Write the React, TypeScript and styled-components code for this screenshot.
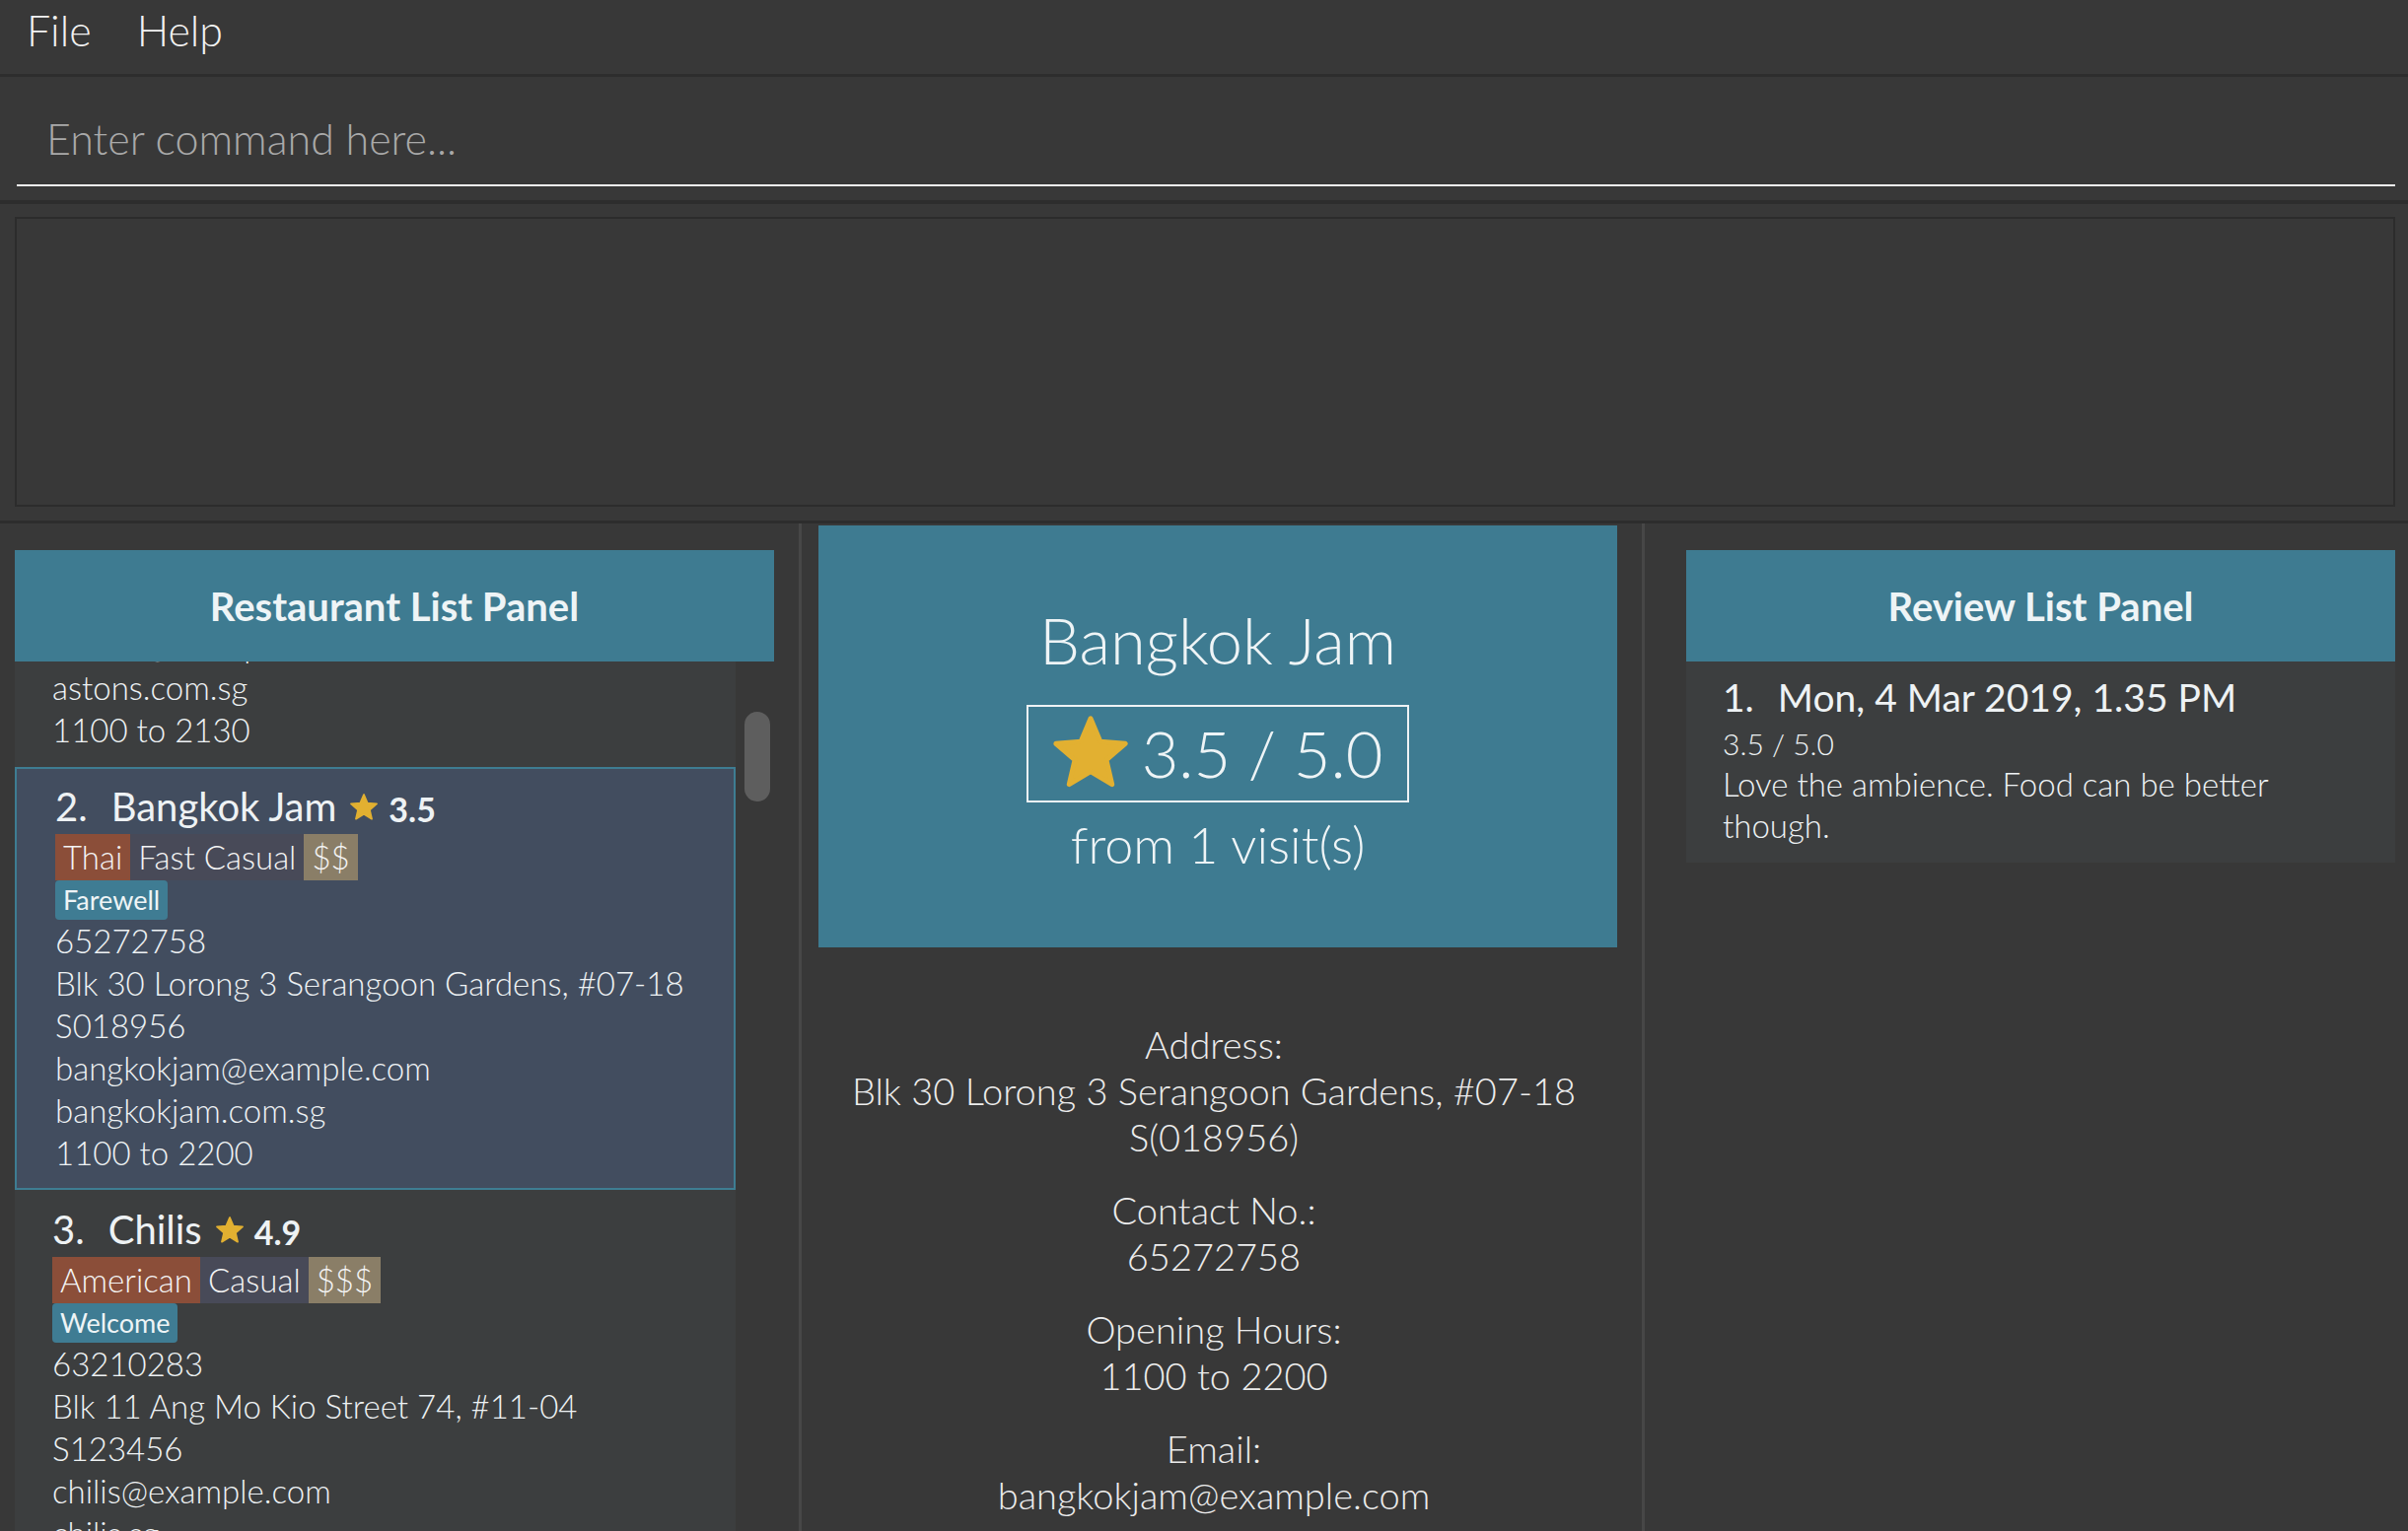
import React from "react";
import styled, { createGlobalStyle } from "styled-components";

const GlobalStyle = createGlobalStyle`
  html, body { margin: 0; padding: 0; background: #383838; }
  body {
    width: 2442px; height: 1553px; overflow: hidden;
    font-family: Lato, "Open Sans", "Liberation Sans", sans-serif;
    color: #eef2f4;
  }
  * { box-sizing: border-box; }
`;

const Window = styled.div`
  width: 2442px;
  height: 1553px;
  display: flex;
  flex-direction: column;
  background: #383838;
  overflow: hidden;
`;

const MenuBar = styled.div`
  flex: none;
  height: 78px;
  display: flex;
  align-items: flex-start;
  padding-left: 4px;
  border-bottom: 3px solid #2d2d2d;
`;

const MenuItem = styled.span`
  font-size: 43px;
  font-weight: 300;
  line-height: 61px;
  padding: 0 23px;
  color: #f2f2f2;
`;

const CommandSection = styled.div`
  flex: none;
  height: 129px;
  display: flex;
  align-items: flex-end;
  padding: 0 13px 14px 17px;
  border-bottom: 4px solid #2d2d2d;
`;

const CommandInput = styled.input`
  width: 100%;
  height: 75px;
  padding: 0 0 21px 30px;
  border: none;
  border-bottom: 2px solid #f2f2f2;
  background: transparent;
  outline: none;
  font-family: inherit;
  font-size: 43px;
  font-weight: 300;
  line-height: 52px;
  color: #f2f2f2;
  &::placeholder { color: #a9a9a9; }
`;

const ResultSection = styled.div`
  flex: none;
  height: 324px;
  display: flex;
  padding: 13px 13px 14px 15px;
  border-bottom: 3px solid #2d2d2d;
`;

const ResultBox = styled.div`
  flex: 1;
  border: 2px solid #2c2c2c;
  background: #383838;
`;

const Main = styled.div`
  flex: 1;
  min-height: 0;
  display: flex;
`;

const Divider = styled.div`
  flex: none;
  width: 3px;
  background: #474747;
`;

const LeftPane = styled.div`
  flex: none;
  width: 810px;
  display: flex;
  flex-direction: column;
  padding: 27px 25px 0 15px;
`;

const CenterPane = styled.div`
  flex: none;
  width: 852px;
  display: flex;
  flex-direction: column;
  padding: 2px 25px 0 17px;
`;

const RightPane = styled.div`
  flex: 1;
  display: flex;
  flex-direction: column;
  padding: 27px 13px 0 42px;
`;

const PanelHeader = styled.div`
  flex: none;
  height: 113px;
  display: flex;
  align-items: center;
  justify-content: center;
  background: #3e7b91;
  font-size: 40px;
  font-weight: 700;
  color: #eef4f6;
`;

const ListArea = styled.div`
  flex: 1;
  min-height: 0;
  display: flex;
`;

const ListViewport = styled.div`
  flex: none;
  width: 731px;
  overflow: hidden;
  background: #3c3e3f;
`;

const ListTrack = styled.div<{ $offset: number }>`
  margin-top: ${(p) => -p.$offset}px;
`;

const Gutter = styled.div`
  flex: 1;
  padding: 51px 4px 0 9px;
`;

const Thumb = styled.div`
  height: 91px;
  border-radius: 13px;
  background: #5e5e5e;
`;

const Card = styled.div<{ $selected?: boolean }>`
  border: 2px solid ${(p) => (p.$selected ? "#3e7d92" : "transparent")};
  background: ${(p) => (p.$selected ? "#424d5f" : "#3c3e3f")};
  padding: 11px 20px 14px ${(p) => (p.$selected ? 39 : 36)}px;
`;

const TitleRow = styled.div`
  display: flex;
  align-items: center;
  height: 54px;
  white-space: nowrap;
`;

const Index = styled.span<{ $size?: number }>`
  font-size: ${(p) => p.$size ?? 40}px;
  font-weight: 400;
  margin-right: 24px;
`;

const Name = styled.span<{ $size?: number }>`
  font-size: ${(p) => p.$size ?? 40}px;
  font-weight: 400;
`;

const SmallStarWrap = styled.span`
  display: flex;
  margin: 2px 11px 0 14px;
`;

const TitleRating = styled.span`
  font-size: 34px;
  font-weight: 700;
  margin-top: 4px;
`;

const TagRow = styled.div`
  display: flex;
  margin-top: 1px;
  height: 47px;
`;

const tagColors: Record<string, string> = {
  cuisine: "#8b4e39",
  type: "#484a58",
  price: "#8a7e67",
};

const Tag = styled.span<{ $kind: "cuisine" | "type" | "price" }>`
  font-size: 33px;
  font-weight: 300;
  line-height: 47px;
  padding: 0 8px;
  background: ${(p) => tagColors[p.$kind]};
  color: #f4f4f4;
`;

const OccasionRow = styled.div`
  display: flex;
  height: 40px;
`;

const Occasion = styled.span`
  font-size: 27px;
  font-weight: 400;
  line-height: 40px;
  padding: 0 8px;
  border-radius: 4px;
  background: #3f7c93;
  color: #eef4f6;
`;

const DetailLine = styled.div`
  font-size: 33px;
  font-weight: 300;
  line-height: 43px;
  white-space: nowrap;
`;

const TealCard = styled.div`
  flex: none;
  height: 428px;
  display: flex;
  flex-direction: column;
  align-items: center;
  justify-content: center;
  background: #3e7b91;
`;

const BigName = styled.div`
  font-size: 65px;
  font-weight: 300;
  line-height: 80px;
  color: #eef4f6;
`;

const RatingBox = styled.div`
  margin-top: 26px;
  height: 99px;
  display: flex;
  align-items: center;
  gap: 14px;
  padding: 0 25px;
  border: 2px solid #eef2f4;
`;

const BigRating = styled.span`
  font-size: 65px;
  font-weight: 300;
  line-height: 95px;
  color: #eef4f6;
`;

const Visits = styled.div`
  margin-top: 12px;
  font-size: 52px;
  font-weight: 300;
  line-height: 60px;
  color: #eef4f6;
`;

const InfoList = styled.div`
  margin-top: 75px;
  padding-right: 8px;
  display: flex;
  flex-direction: column;
  align-items: center;
  gap: 27px;
`;

const InfoBlock = styled.div`
  display: flex;
  flex-direction: column;
  align-items: center;
`;

const InfoText = styled.div`
  font-size: 38px;
  font-weight: 300;
  line-height: 47px;
  text-align: center;
  white-space: nowrap;
  color: #ececec;
`;

const ReviewCard = styled.div`
  background: #3c3e3f;
  padding: 9px 40px 17px 37px;
`;

const ReviewTitle = styled.div`
  display: flex;
  align-items: center;
  height: 54px;
  white-space: nowrap;
`;

const ReviewRating = styled.div`
  font-size: 30px;
  font-weight: 300;
  line-height: 40px;
`;

const ReviewText = styled.div`
  font-size: 33px;
  font-weight: 300;
  line-height: 42px;
`;

const StarIcon = ({ size }: { size: number }) => (
  <svg width={size} height={size} viewBox="1.2 1.2 21.6 21.6">
    <path
      d="M12 17.27L18.18 21l-1.64-7.03L22 9.24l-7.19-.61L12 2 9.19 8.63 2 9.24l5.46 4.73L5.82 21z"
      fill="#e2b031"
      stroke="#e2b031"
      strokeWidth={1.4}
      strokeLinejoin="round"
    />
  </svg>
);

type Restaurant = {
  id: number;
  name: string;
  rating: string;
  cuisine: string;
  type: string;
  price: string;
  occasion: string;
  phone: string;
  address: string;
  postal: string;
  email: string;
  website: string;
  hours: string;
};

const restaurants: Restaurant[] = [
  {
    id: 1,
    name: "Astons",
    rating: "4.2",
    cuisine: "Western",
    type: "Casual",
    price: "$$",
    occasion: "Family",
    phone: "62345678",
    address: "Blk 16 Marina Boulevard, #01-01",
    postal: "S018989",
    email: "astons@example.com",
    website: "astons.com.sg",
    hours: "1100 to 2130",
  },
  {
    id: 2,
    name: "Bangkok Jam",
    rating: "3.5",
    cuisine: "Thai",
    type: "Fast Casual",
    price: "$$",
    occasion: "Farewell",
    phone: "65272758",
    address: "Blk 30 Lorong 3 Serangoon Gardens, #07-18",
    postal: "S018956",
    email: "bangkokjam@example.com",
    website: "bangkokjam.com.sg",
    hours: "1100 to 2200",
  },
  {
    id: 3,
    name: "Chilis",
    rating: "4.9",
    cuisine: "American",
    type: "Casual",
    price: "$$$",
    occasion: "Welcome",
    phone: "63210283",
    address: "Blk 11 Ang Mo Kio Street 74, #11-04",
    postal: "S123456",
    email: "chilis@example.com",
    website: "chilis.sg",
    hours: "1100 to 2200",
  },
];

const RestaurantCard = ({ r, selected }: { r: Restaurant; selected?: boolean }) => (
  <Card $selected={selected}>
    <TitleRow>
      <Index>{r.id}.</Index>
      <Name>{r.name}</Name>
      <SmallStarWrap>
        <StarIcon size={28} />
      </SmallStarWrap>
      <TitleRating>{r.rating}</TitleRating>
    </TitleRow>
    <TagRow>
      <Tag $kind="cuisine">{r.cuisine}</Tag>
      <Tag $kind="type">{r.type}</Tag>
      <Tag $kind="price">{r.price}</Tag>
    </TagRow>
    <OccasionRow>
      <Occasion>{r.occasion}</Occasion>
    </OccasionRow>
    <DetailLine>{r.phone}</DetailLine>
    <DetailLine>{r.address}</DetailLine>
    <DetailLine>{r.postal}</DetailLine>
    <DetailLine>{r.email}</DetailLine>
    <DetailLine>{r.website}</DetailLine>
    <DetailLine>{r.hours}</DetailLine>
  </Card>
);

const info: string[][] = [
  ["Address:", "Blk 30 Lorong 3 Serangoon Gardens, #07-18", "S(018956)"],
  ["Contact No.:", "65272758"],
  ["Opening Hours:", "1100 to 2200"],
  ["Email:", "bangkokjam@example.com"],
  ["Website:", "bangkokjam.com.sg"],
];

export default function App() {
  return (
    <>
      <GlobalStyle />
      <Window>
        <MenuBar>
          <MenuItem>File</MenuItem>
          <MenuItem>Help</MenuItem>
        </MenuBar>
        <CommandSection>
          <CommandInput placeholder="Enter command here..." />
        </CommandSection>
        <ResultSection>
          <ResultBox />
        </ResultSection>
        <Main>
          <LeftPane>
            <PanelHeader>Restaurant List Panel</PanelHeader>
            <ListArea>
              <ListViewport>
                <ListTrack $offset={322}>
                  {restaurants.map((r) => (
                    <RestaurantCard key={r.id} r={r} selected={r.id === 2} />
                  ))}
                </ListTrack>
              </ListViewport>
              <Gutter>
                <Thumb />
              </Gutter>
            </ListArea>
          </LeftPane>
          <Divider />
          <CenterPane>
            <TealCard>
              <BigName>Bangkok Jam</BigName>
              <RatingBox>
                <StarIcon size={76} />
                <BigRating>3.5 / 5.0</BigRating>
              </RatingBox>
              <Visits>from 1 visit(s)</Visits>
            </TealCard>
            <InfoList>
              {info.map((block) => (
                <InfoBlock key={block[0]}>
                  {block.map((line) => (
                    <InfoText key={line}>{line}</InfoText>
                  ))}
                </InfoBlock>
              ))}
            </InfoList>
          </CenterPane>
          <Divider />
          <RightPane>
            <PanelHeader>Review List Panel</PanelHeader>
            <ReviewCard>
              <ReviewTitle>
                <Index $size={39}>1.</Index>
                <Name $size={39}>Mon, 4 Mar 2019, 1.35 PM</Name>
              </ReviewTitle>
              <ReviewRating>3.5 / 5.0</ReviewRating>
              <ReviewText>Love the ambience. Food can be better though.</ReviewText>
            </ReviewCard>
          </RightPane>
        </Main>
      </Window>
    </>
  );
}
